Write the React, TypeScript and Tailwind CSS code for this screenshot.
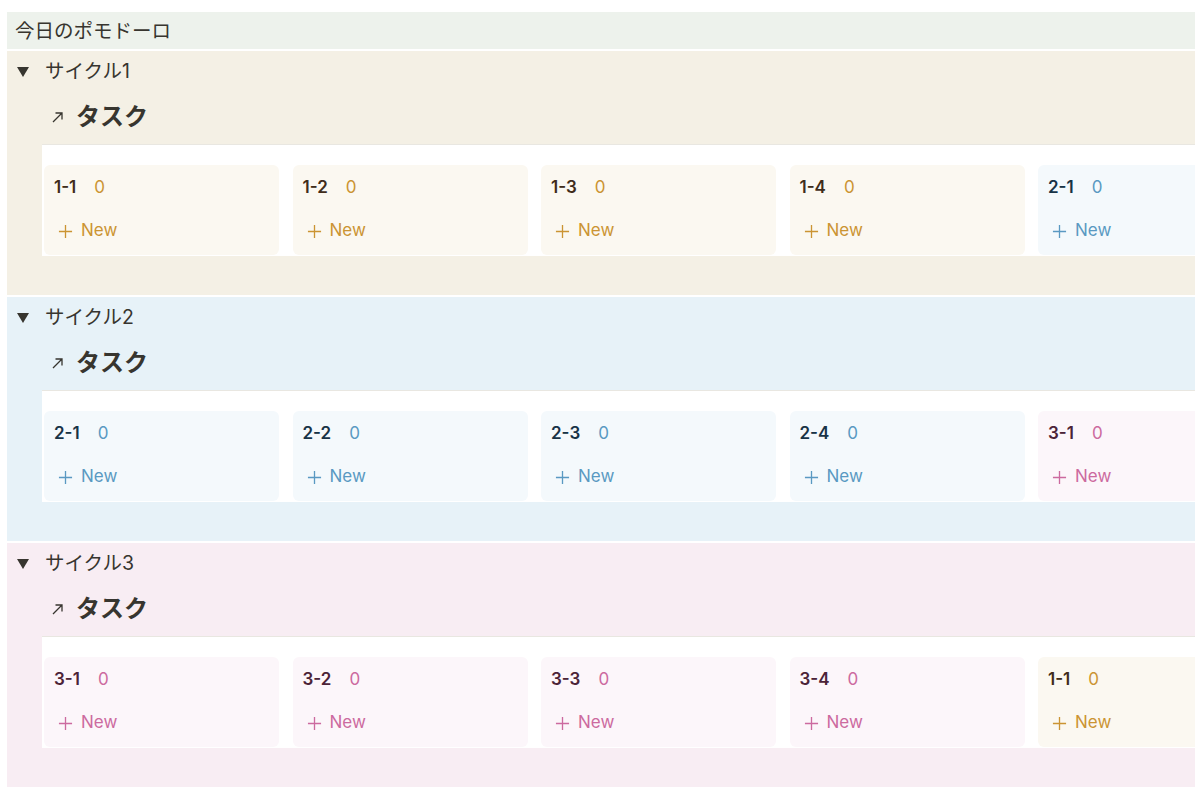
import React from "react";

type Tone = "yellow" | "blue" | "pink";

const TONES: Record<
  Tone,
  { section: string; card: string; title: string; accent: string }
> = {
  yellow: {
    section: "bg-[#f4f0e5]",
    card: "bg-[#fbf8f1]",
    title: "text-[#402c1b]",
    accent: "text-[#cb9433]",
  },
  blue: {
    section: "bg-[#e7f2f8]",
    card: "bg-[#f4f9fc]",
    title: "text-[#183347]",
    accent: "text-[#5a99c2]",
  },
  pink: {
    section: "bg-[#f8edf3]",
    card: "bg-[#fcf6fa]",
    title: "text-[#4c2337]",
    accent: "text-[#cc6a9f]",
  },
};

const font = "font-['Inter','Noto_Sans_CJK_JP',sans-serif]";

const cycles: { name: string; tone: Tone; groups: { label: string; tone: Tone }[] }[] = [
  {
    name: "サイクル1",
    tone: "yellow",
    groups: [
      { label: "1-1", tone: "yellow" },
      { label: "1-2", tone: "yellow" },
      { label: "1-3", tone: "yellow" },
      { label: "1-4", tone: "yellow" },
      { label: "2-1", tone: "blue" },
    ],
  },
  {
    name: "サイクル2",
    tone: "blue",
    groups: [
      { label: "2-1", tone: "blue" },
      { label: "2-2", tone: "blue" },
      { label: "2-3", tone: "blue" },
      { label: "2-4", tone: "blue" },
      { label: "3-1", tone: "pink" },
    ],
  },
  {
    name: "サイクル3",
    tone: "pink",
    groups: [
      { label: "3-1", tone: "pink" },
      { label: "3-2", tone: "pink" },
      { label: "3-3", tone: "pink" },
      { label: "3-4", tone: "pink" },
      { label: "1-1", tone: "yellow" },
    ],
  },
];

// ボードの列（グループ）
function GroupColumn({ label, tone }: { label: string; tone: Tone }) {
  const t = TONES[tone];
  return (
    <div className={`w-[235px] h-[90px] shrink-0 rounded-[6px] ${t.card} px-[10px] pt-[12px]`}>
      <div className="flex items-center h-[22px] text-[17px]">
        <span className={`font-semibold ${t.title}`}>{label}</span>
        <span className={`ml-[18px] ${t.accent}`}>0</span>
      </div>
      <div className={`mt-[21px] flex items-center h-[22px] text-[17px] ${t.accent}`}>
        <svg className="ml-[4px] w-[15px] h-[15px]" viewBox="0 0 16 16" fill="none" stroke="currentColor" strokeWidth={1.4}>
          <path d="M8 1v14M1 8h14" />
        </svg>
        <span className="ml-[8px]">New</span>
      </div>
    </div>
  );
}

function CycleSection({ name, tone, groups }: (typeof cycles)[number]) {
  const t = TONES[tone];
  return (
    <div className={`h-[244px] ${t.section} flex flex-col overflow-hidden`}>
      {/* トグル見出し */}
      <div className="h-[40px] pt-[2px] flex items-center text-[#37352f]">
        <svg className="ml-[10px] w-[12px] h-[10px]" viewBox="0 0 12 10">
          <polygon points="0,0 12,0 6,10" fill="#37352f" />
        </svg>
        <span className="ml-[16px] text-[19.5px]">{name}</span>
      </div>

      {/* リンクドデータベースのタイトル */}
      <div className="mt-[8px] h-[36px] flex items-center ml-[45px] text-[#37352f]">
        <svg className="w-[11px] h-[11px]" viewBox="0 0 11 11" fill="none" stroke="#37352f" strokeWidth={1.3}>
          <path d="M1 10 L10 1 M3.5 1 H10 V7.5" />
        </svg>
        <span className="ml-[13px] text-[24px] font-bold">タスク</span>
      </div>

      {/* ボード */}
      <div className="mt-[9px] ml-[35px] bg-white border-t border-[#e9e7e1] pt-[20px] pb-[1px] pl-[2px] flex gap-[13.5px] overflow-hidden">
        {groups.map((g, i) => (
          <GroupColumn key={i} label={g.label} tone={g.tone} />
        ))}
      </div>
    </div>
  );
}

export default function App() {
  return (
    <div className={`w-[1200px] h-[802px] bg-white pt-[12px] pl-[7px] pr-[5px] ${font}`}>
      <div className="h-[37px] bg-[#edf2ec] flex items-center pl-[8px] pt-[2px] text-[19.5px] text-[#37352f]">
        今日のポモドーロ
      </div>
      <div className="mt-[2px] flex flex-col gap-[2px]">
        {cycles.map((c) => (
          <CycleSection key={c.name} {...c} />
        ))}
      </div>
    </div>
  );
}
